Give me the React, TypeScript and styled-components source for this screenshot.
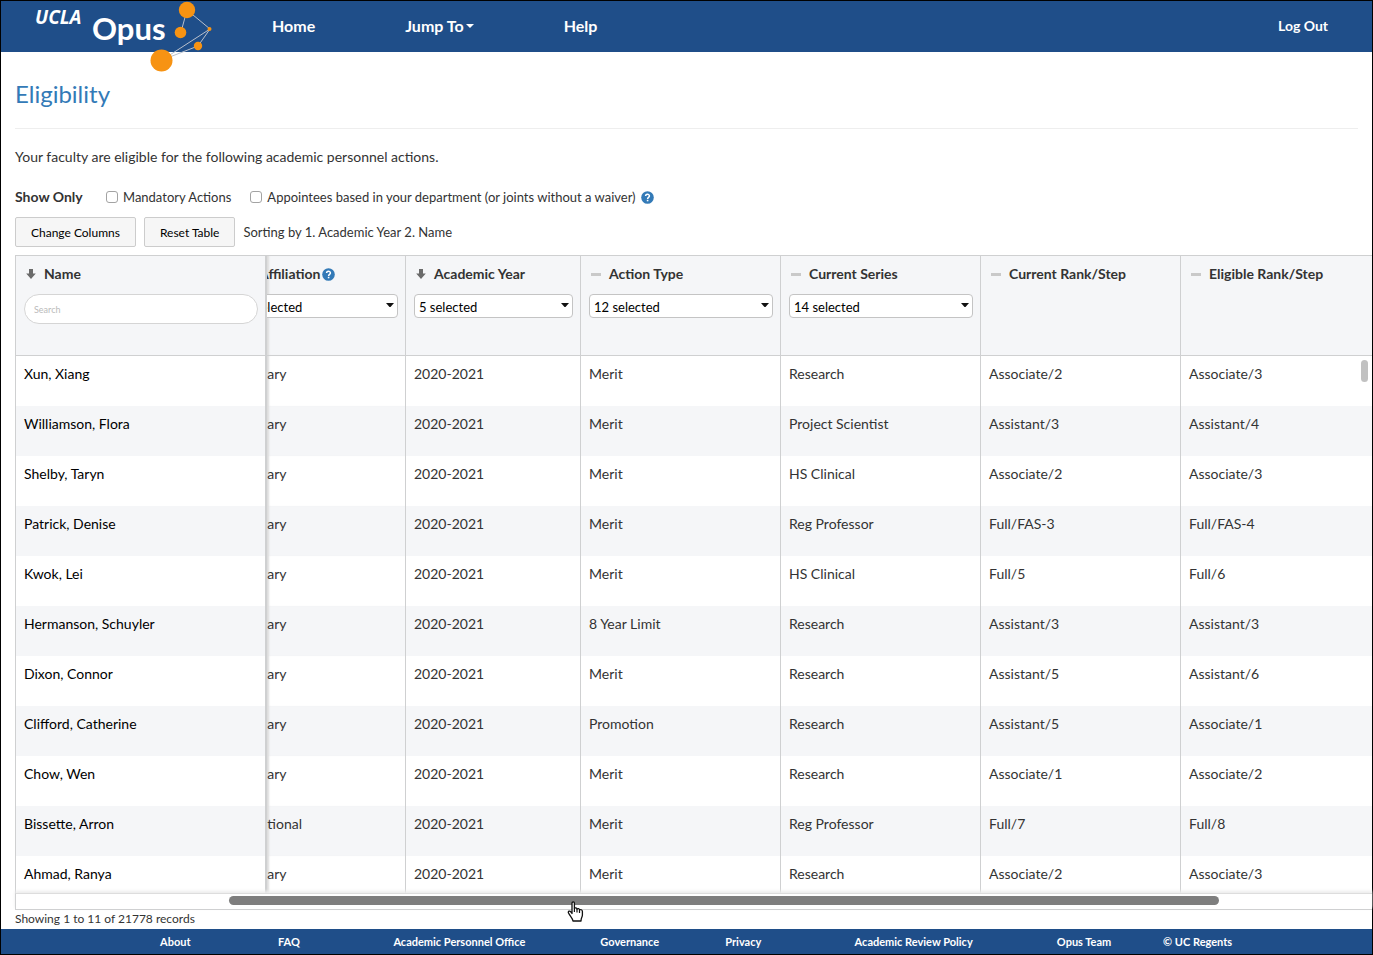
import React from "react";
import styled, { createGlobalStyle } from "styled-components";

const navy = "#1f4e89";
const line = "#cfd0d1";
const stripe = "#f5f6f8";
const link = "#337ab7";

const GlobalStyle = createGlobalStyle`
  *, *::before, *::after { box-sizing: border-box; }
  body {
    margin: 0;
    background: #fff;
    color: #333;
    font-family: Lato, "Open Sans", sans-serif;
    font-size: 14px;
    line-height: 20px;
  }
`;

const Page = styled.div`
  display: flex;
  flex-direction: column;
  height: 100vh;
  min-height: 600px;
  border: 1px solid #000;
`;

const TopBar = styled.header`
  display: flex;
  align-items: center;
  flex: none;
  height: 51px;
  padding: 0 44px 0 34px;
  background: ${navy};
  color: #fff;
`;

const Brand = styled.a`
  display: flex;
  align-items: flex-start;
  width: 237px;
  height: 51px;
  color: #fff;
  text-decoration: none;
`;

const Campus = styled.span`
  padding-top: 6px;
  width: 57px;
  font-family: "Open Sans", sans-serif;
  font-size: 19px;
  font-weight: 700;
  font-style: italic;
`;

const Product = styled.span`
  padding-top: 7px;
  width: 58px;
  font-size: 31px;
  font-weight: 700;
  line-height: 40px;
`;

const Constellation = styled.svg`
  flex: none;
  width: 64px;
  height: 72px;
  overflow: visible;
`;

const Nav = styled.nav`
  display: flex;
  flex: 1;
  gap: 90px;
`;

const NavLink = styled.a`
  display: flex;
  align-items: center;
  gap: 2px;
  padding-bottom: 2px;
  color: #fff;
  font-size: 16px;
  font-weight: 700;
  text-decoration: none;
`;

const LogOut = styled(NavLink)`
  font-size: 14px;
`;

const Intro = styled.section`
  flex: none;
  padding: 28px 14px 8px;
`;

const Title = styled.h1`
  margin: 0;
  padding-bottom: 20px;
  border-bottom: 1px solid #eee;
  color: ${link};
  font-size: 24px;
  font-weight: 400;
  line-height: 28px;
`;

const Lead = styled.p`
  margin: 18px 0 20px;
`;

const Options = styled.div`
  display: flex;
  align-items: center;
  margin-bottom: 10px;
  font-size: 13px;
`;

const OptionsTitle = styled.strong`
  width: 91px;
  font-size: 14px;
`;

const Option = styled.label`
  display: flex;
  align-items: center;
  gap: 5px;
  margin-right: 19px;
`;

const Check = styled.input`
  appearance: none;
  width: 12px;
  height: 12px;
  margin: 0;
  border: 1px solid #a3a3a3;
  border-radius: 3px;
  background: #fff;
`;

const HelpButton = styled.button`
  display: flex;
  padding: 0;
  border: 0;
  background: none;
`;

const Actions = styled.div`
  display: flex;
  align-items: center;
  gap: 8px;
  font-size: 13px;
`;

const ActionButton = styled.button`
  height: 30px;
  padding: 0 15px;
  border: 1px solid #ccc;
  border-radius: 2px;
  background: #f6f6f6;
  color: #000;
  font-family: inherit;
  font-size: 12px;
`;

const GridArea = styled.section`
  position: relative;
  display: flex;
  flex: 1;
  flex-direction: column;
  min-height: 0;
  margin-left: 14px;
`;

const Viewport = styled.div`
  flex: 1;
  min-height: 0;
  overflow: hidden;
`;

const Table = styled.table`
  width: 100%;
  table-layout: fixed;
  border-collapse: separate;
  border-spacing: 0;
`;

const Col = styled.col<{ $width?: number }>`
  width: ${(p) => (p.$width ? `${p.$width}px` : "auto")};
`;

const HeadCell = styled.th`
  height: 101px;
  padding: 8px 7px 0 8px;
  border: 1px solid ${line};
  border-right: 0;
  background: ${stripe};
  text-align: left;
  vertical-align: top;
  font-weight: 700;
`;

const NameHead = styled(HeadCell)`
  border-right: 2px solid ${line};
`;

const ClippedHead = styled(HeadCell)`
  padding-left: 0;
  border-left: 0;
  overflow: hidden;
  box-shadow: inset 3px 0 2px -1px #ddd;
`;

const Row = styled.tr`
  &:nth-child(even) td {
    background-color: ${stripe};
  }
`;

const Cell = styled.td`
  height: 50px;
  padding: 8px 7px 0 8px;
  border-left: 1px solid ${line};
  vertical-align: top;
`;

const NameCell = styled(Cell)`
  border-right: 2px solid ${line};
  color: #000;
`;

const ClippedCell = styled(Cell)`
  padding-left: 0;
  border-left: 0;
  overflow: hidden;
  box-shadow: inset 3px 0 2px -1px #ddd;
`;

/* The part of the column that is scrolled under the frozen one. */
const Scrolled = styled.div`
  margin-left: -28px;
`;

const Heading = styled.div`
  display: flex;
  align-items: center;
  padding-left: 2px;
  white-space: nowrap;
`;

const SortIcon = styled.svg`
  flex: none;
  width: 10px;
  height: 12px;
  margin-right: 8px;
`;

const HeadingHelp = styled.span`
  display: flex;
  margin-left: 2px;
`;

const Search = styled.input`
  display: block;
  width: 100%;
  height: 30px;
  margin-top: 10px;
  padding: 0 9px;
  border: 1px solid #d5d5d5;
  border-radius: 15px;
  background: #fff;
  font-family: inherit;
  font-size: 9px;
  &::placeholder { color: #bbb; }
`;

const SelectBox = styled.div`
  position: relative;
  margin-top: 10px;
`;

const Select = styled.select`
  appearance: none;
  display: block;
  width: 100%;
  height: 24px;
  padding: 2px 4px 0;
  border: 1px solid #c4c4c4;
  border-radius: 4px;
  background: #fff;
  color: #000;
  font-family: inherit;
  font-size: 13px;
`;

const SelectArrow = styled.svg`
  position: absolute;
  top: 9px;
  right: 4px;
  width: 8px;
  height: 5px;
  pointer-events: none;
`;

const VerticalThumb = styled.div`
  position: absolute;
  top: 105px;
  right: 4px;
  width: 7px;
  height: 22px;
  border-radius: 4px;
  background: #c1c1c1;
`;

const Track = styled.div`
  position: relative;
  flex: none;
  height: 17px;
  padding: 2px 0;
  border: 1px solid ${line};
  border-width: 1px 0 1px 1px;
  border-top-color: #ddd;
  box-shadow: 0 -2px 3px #ececec;
  background: #fff;
`;

const Thumb = styled.div`
  width: 73%;
  height: 9px;
  margin-left: 15.7%;
  border-radius: 5px;
  background: #7e7e7e;
`;

const Pointer = styled.svg`
  position: absolute;
  top: 7px;
  left: 40.6%;
  width: 17px;
  height: 21px;
`;

const Summary = styled.p`
  flex: none;
  margin: 0;
  padding-left: 14px;
  height: 19px;
  font-size: 12px;
  line-height: 18px;
`;

const Footer = styled.footer`
  display: grid;
  flex: none;
  grid-template-columns: 1fr 1fr 1fr 2fr 1fr 1fr 2fr 1fr 1fr 1fr;
  align-items: center;
  height: 25px;
  padding: 0 4px;
  background: ${navy};
  text-align: center;
`;

const FooterLink = styled.a`
  color: #fff;
  font-size: 11px;
  font-weight: 700;
  text-decoration: none;
  white-space: nowrap;
  &:first-child { grid-column: 2; }
`;

const HelpIcon = () => (
  <svg width="13" height="13" viewBox="0 0 13 13" aria-hidden="true">
    <circle cx="6.5" cy="6.5" r="6.3" fill={link} />
    <path d="M4.6 5.1C4.6 2.8 8.4 2.8 8.4 5C8.4 6.4 6.6 6.3 6.6 7.9" fill="none" stroke="#fff" strokeWidth="1.5" />
    <rect x="5.8" y="8.8" width="1.6" height="1.5" fill="#fff" />
  </svg>
);

const Sort = ({ down }: { down?: boolean }) => (
  <SortIcon viewBox="0 0 10 12" aria-hidden="true">
    {down ? (
      <path d="M3 1H7V5.5H9.8L5 11L0.2 5.5H3Z" fill="#6b6b6b" />
    ) : (
      <rect x="0" y="5" width="10" height="3" fill="#c9c9c9" />
    )}
  </SortIcon>
);

const Filter = ({ name, value }: { name: string; value: string }) => (
  <SelectBox>
    <Select aria-label={name} defaultValue={value}>
      <option>{value}</option>
    </Select>
    <SelectArrow viewBox="0 0 8 5" aria-hidden="true">
      <path d="M0 0H8L4.5 4H3.5Z" fill="#111" />
    </SelectArrow>
  </SelectBox>
);

const columns = [
  { name: "Academic Year", filter: "5 selected", down: true },
  { name: "Action Type", filter: "12 selected" },
  { name: "Current Series", filter: "14 selected" },
  { name: "Current Rank/Step" },
  { name: "Eligible Rank/Step" },
];

const rows = [
  ["Xun, Xiang", "Primary", "Merit", "Research", "Associate/2", "Associate/3"],
  ["Williamson, Flora", "Primary", "Merit", "Project Scientist", "Assistant/3", "Assistant/4"],
  ["Shelby, Taryn", "Primary", "Merit", "HS Clinical", "Associate/2", "Associate/3"],
  ["Patrick, Denise", "Primary", "Merit", "Reg Professor", "Full/FAS-3", "Full/FAS-4"],
  ["Kwok, Lei", "Primary", "Merit", "HS Clinical", "Full/5", "Full/6"],
  ["Hermanson, Schuyler", "Primary", "8 Year Limit", "Research", "Assistant/3", "Assistant/3"],
  ["Dixon, Connor", "Primary", "Merit", "Research", "Assistant/5", "Assistant/6"],
  ["Clifford, Catherine", "Primary", "Promotion", "Research", "Assistant/5", "Associate/1"],
  ["Chow, Wen", "Primary", "Merit", "Research", "Associate/1", "Associate/2"],
  ["Bissette, Arron", "Additional", "Merit", "Reg Professor", "Full/7", "Full/8"],
  ["Ahmad, Ranya", "Primary", "Merit", "Research", "Associate/2", "Associate/3"],
];

const footerLinks = [
  "About",
  "FAQ",
  "Academic Personnel Office",
  "Governance",
  "Privacy",
  "Academic Review Policy",
  "Opus Team",
  "© UC Regents",
];

export default function App() {
  return (
    <Page>
      <GlobalStyle />
      <TopBar>
        <Brand href="#">
          <Campus>UCLA</Campus>
          <Product>Opus</Product>
          <Constellation viewBox="0 0 64 72" aria-hidden="true">
            <g stroke="#b9c0cc" strokeWidth="1" fill="none">
              <path d="M37 9L31 31M37 9L60 28L48 45L12 59L60 28" />
            </g>
            <g fill="#f79313">
              <circle cx="37" cy="9" r="8.2" />
              <circle cx="30.5" cy="31.5" r="5.8" />
              <circle cx="59.5" cy="28" r="2" />
              <circle cx="48" cy="45" r="4.2" />
              <circle cx="11.5" cy="59.5" r="11" />
            </g>
          </Constellation>
        </Brand>
        <Nav>
          <NavLink href="#">Home</NavLink>
          <NavLink href="#">
            Jump To
            <svg width="8" height="4" viewBox="0 0 8 4" aria-hidden="true">
              <path d="M0 0H8L4 4Z" fill="#fff" />
            </svg>
          </NavLink>
          <NavLink href="#">Help</NavLink>
        </Nav>
        <LogOut href="#">Log Out</LogOut>
      </TopBar>

      <Intro>
        <Title>Eligibility</Title>
        <Lead>Your faculty are eligible for the following academic personnel actions.</Lead>
        <Options>
          <OptionsTitle>Show Only</OptionsTitle>
          <Option>
            <Check type="checkbox" />
            Mandatory Actions
          </Option>
          <Option>
            <Check type="checkbox" />
            Appointees based in your department (or joints without a waiver)
            <HelpButton type="button" aria-label="Help">
              <HelpIcon />
            </HelpButton>
          </Option>
        </Options>
        <Actions>
          <ActionButton type="button">Change Columns</ActionButton>
          <ActionButton type="button">Reset Table</ActionButton>
          <span>Sorting by 1. Academic Year 2. Name</span>
        </Actions>
      </Intro>

      <GridArea>
        <Viewport>
          <Table>
            <colgroup>
              <Col $width={252} />
              <Col $width={138} />
              <Col $width={175} />
              <Col $width={200} />
              <Col $width={200} />
              <Col $width={200} />
              <Col />
            </colgroup>
            <thead>
              <tr>
                <NameHead>
                  <Heading>
                    <Sort down />
                    Name
                  </Heading>
                  <Search type="text" placeholder="Search" aria-label="Search by name" />
                </NameHead>
                <ClippedHead>
                  <Scrolled>
                    <Heading>
                      <Sort />
                      Affiliation
                      <HeadingHelp>
                        <HelpIcon />
                      </HeadingHelp>
                    </Heading>
                    <Filter name="Affiliation" value="2 selected" />
                  </Scrolled>
                </ClippedHead>
                {columns.map((c) => (
                  <HeadCell key={c.name}>
                    <Heading>
                      <Sort down={c.down} />
                      {c.name}
                    </Heading>
                    {c.filter && <Filter name={c.name} value={c.filter} />}
                  </HeadCell>
                ))}
              </tr>
            </thead>
            <tbody>
              {rows.map(([name, affiliation, action, series, current, eligible]) => (
                <Row key={name}>
                  <NameCell>{name}</NameCell>
                  <ClippedCell>
                    <Scrolled>{affiliation}</Scrolled>
                  </ClippedCell>
                  <Cell>2020-2021</Cell>
                  <Cell>{action}</Cell>
                  <Cell>{series}</Cell>
                  <Cell>{current}</Cell>
                  <Cell>{eligible}</Cell>
                </Row>
              ))}
            </tbody>
          </Table>
        </Viewport>
        <VerticalThumb />
        <Track>
          <Thumb />
          <Pointer viewBox="0 0 17 21" aria-hidden="true">
            <path
              d="M5 2C5 .6 7.4 .6 7.4 2V7.5C8 6.6 9.8 6.8 10 8C10.8 7.2 12.4 7.6 12.5 8.8C13.6 8.2 15.4 8.8 15.4 10.4V14C15.4 16 14 17 14 20H6C6 17.6 3 15 1.5 12C.6 10.2 2.8 9.4 3.8 10.8L5 12.5Z"
              fill="#fff"
              stroke="#111"
              strokeWidth="1.3"
              strokeLinejoin="round"
            />
            <path d="M7.4 7.5V11M10 8V11.5M12.5 9V12" stroke="#111" strokeWidth="1.2" fill="none" />
          </Pointer>
        </Track>
      </GridArea>
      <Summary>Showing 1 to 11 of 21778 records</Summary>

      <Footer>
        {footerLinks.map((t) => (
          <FooterLink key={t} href="#">
            {t}
          </FooterLink>
        ))}
      </Footer>
    </Page>
  );
}
